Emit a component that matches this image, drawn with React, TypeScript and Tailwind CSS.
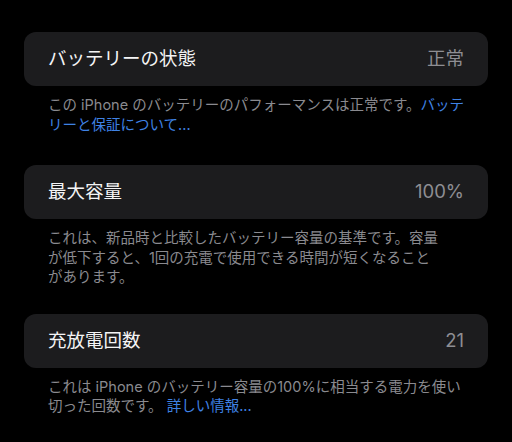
const font = { fontFamily: 'Inter, "Noto Sans CJK JP", sans-serif' };

type Section = {
  title: string;
  value: string;
  lines: React.ReactNode[];
  gap: string;
};

const sections: Section[] = [
  {
    title: "バッテリーの状態",
    value: "正常",
    lines: [
      <>
        この iPhone のバッテリーのパフォーマンスは正常です。
        <span className="text-[#3f82e4]">バッテ</span>
      </>,
      <span className="text-[#3f82e4]">リーと保証について...</span>,
    ],
    gap: "mb-[31px]",
  },
  {
    title: "最大容量",
    value: "100%",
    lines: [
      "これは、新品時と比較したバッテリー容量の基準です。容量",
      "が低下すると、1回の充電で使用できる時間が短くなること",
      "があります。",
    ],
    gap: "mb-[27px]",
  },
  {
    title: "充放電回数",
    value: "21",
    lines: [
      "これは iPhone のバッテリー容量の100%に相当する電力を使い",
      <>
        切った回数です。 <span className="text-[#3f82e4]">詳しい情報...</span>
      </>,
    ],
    gap: "",
  },
];

export default function App() {
  return (
    <div className="w-[512px] h-[442px] bg-black overflow-hidden pt-[32px] px-6" style={font}>
      {sections.map((s) => (
        <div key={s.title} className={s.gap}>
          <div className="h-[54px] rounded-[12px] bg-[#1c1c1e] px-6 flex items-center justify-between">
            <span className="text-[18.5px] text-[#f4f4f5]">{s.title}</span>
            <span className="text-[18.5px] text-[#8e8e93]">{s.value}</span>
          </div>
          <div className="px-6 pt-[9px] text-[14.5px] leading-[19.5px] text-[#8a8a8f] whitespace-nowrap">
            {s.lines.map((l, i) => (
              <div key={i}>{l}</div>
            ))}
          </div>
        </div>
      ))}
    </div>
  );
}
